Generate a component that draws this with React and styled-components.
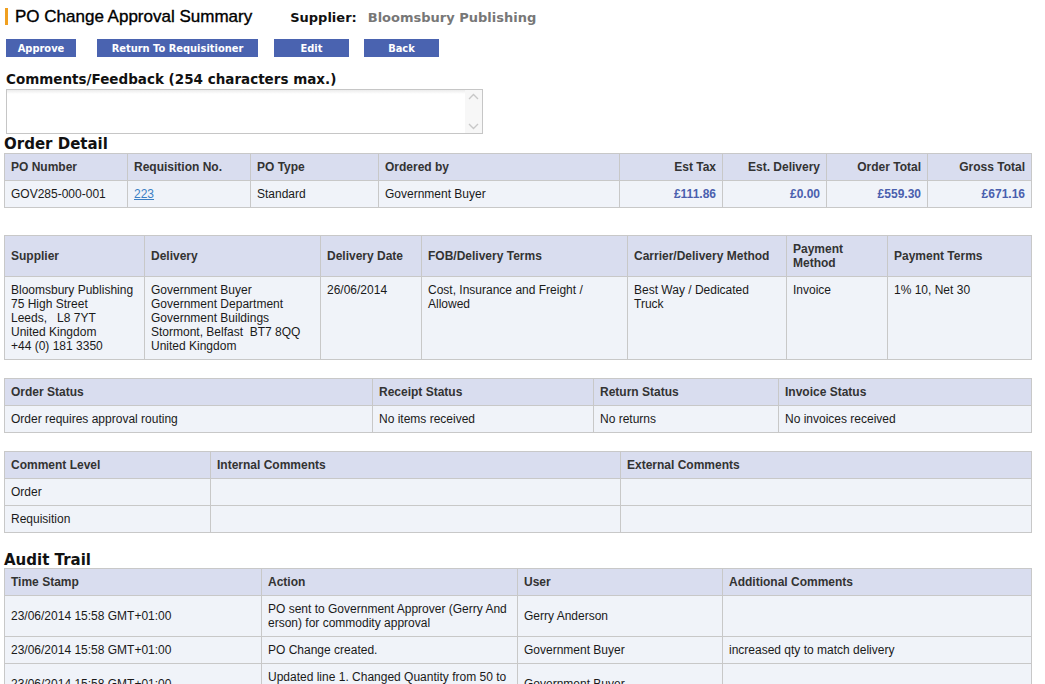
import React from 'react';
import styled, { createGlobalStyle } from 'styled-components';

const GlobalStyle = createGlobalStyle`
  body {
    margin: 0;
    background: #fff;
    font-family: 'Liberation Sans', Arial, sans-serif;
    color: #1a1a1a;
  }
`;

// STYLES

const Page = styled.div`
  padding: 6px 0 0 4px;
  width: 1027px;
`;

const TitleRow = styled.div`
  display: flex;
  align-items: flex-end;
  height: 19px;
`;
const Title = styled.h1`
  margin: 0 0 0 1px;
  padding-left: 7px;
  border-left: 3px solid #f0a020;
  font-family: 'Liberation Sans', Arial, sans-serif;
  font-size: 17px;
  line-height: 17px;
  font-weight: normal;
  -webkit-text-stroke: 0.35px #000;
  color: #000;
`;
const SupplierLabel = styled.span`
  margin-left: 38px;
  font-family: 'DejaVu Sans', Verdana, sans-serif;
  font-weight: bold;
  font-size: 13px;
  color: #111;
`;
const SupplierName = styled.span`
  margin-left: 11px;
  font-family: 'DejaVu Sans', Verdana, sans-serif;
  font-weight: bold;
  font-size: 13px;
  color: #777;
`;

const ButtonBar = styled.div`
  display: flex;
  margin: 14px 0 0 2px;
`;
const Button = styled.button`
  width: ${p => p.w}px;
  margin-right: ${p => p.gap}px;
  height: 18px;
  padding: 0;
  border: none;
  background: #4a63b0;
  color: #fff;
  font-family: 'DejaVu Sans Condensed', 'DejaVu Sans', Verdana, sans-serif;
  font-weight: bold;
  font-size: 11px;
  cursor: pointer;
`;

const Label = styled.div`
  margin: 14px 0 0 2px;
  font-family: 'DejaVu Sans', Verdana, sans-serif;
  font-weight: bold;
  font-size: 13.5px;
  line-height: 17px;
  color: #111;
`;

const CommentBox = styled.div`
  display: flex;
  width: 475px;
  height: 43px;
  margin: 1px 0 0 2px;
  border: 1px solid #c6c6c6;
  background: #fff;
`;
const CommentInput = styled.textarea`
  flex: 1;
  border: none;
  outline: none;
  resize: none;
  padding: 2px;
  background: linear-gradient(#ececec, #fff 4px);
`;
const ScrollStrip = styled.div`
  width: 17px;
  display: flex;
  flex-direction: column;
  justify-content: space-between;
  align-items: center;
  padding: 3px 0;
  background: #f7f7f7;
`;

const SectionTitle = styled.div`
  margin-top: ${p => p.top || 0}px;
  margin-bottom: ${p => p.bottom || 0}px;
  font-family: 'DejaVu Sans', Verdana, sans-serif;
  font-weight: bold;
  font-size: 15px;
  line-height: 16px;
  color: #111;
`;

const Table = styled.table`
  width: 1027px;
  margin-top: ${p => p.top || 0}px;
  border-collapse: collapse;
  table-layout: fixed;
  font-family: 'Liberation Sans', Arial, sans-serif;
  font-size: 12px;
  line-height: 14px;
`;
const Th = styled.th`
  padding: 6px 6px;
  border: 1px solid #c8c8c8;
  background: #d9ddef;
  color: #333;
  font-weight: bold;
  text-align: ${p => (p.right ? 'right' : 'left')};
  vertical-align: middle;
`;
const Td = styled.td`
  padding: 6px 6px;
  border: 1px solid #c8c8c8;
  background: #f0f3f9;
  color: #1a1a1a;
  text-align: ${p => (p.right ? 'right' : 'left')};
  vertical-align: ${p => (p.top ? 'top' : 'middle')};
  word-break: ${p => (p.breakAll ? 'break-all' : 'normal')};
`;
const Money = styled.span`
  font-weight: bold;
  color: #4a5fae;
`;
const Link = styled.a`
  color: #3b7fc4;
  text-decoration: underline;
`;

const Chevron = ({ up }) => (
  <svg width="11" height="7" viewBox="0 0 11 7">
    <path
      d={up ? 'M1 6 L5.5 1.5 L10 6' : 'M1 1 L5.5 5.5 L10 1'}
      fill="none"
      stroke="#c8c8c8"
      strokeWidth="1.4"
    />
  </svg>
);

const Cols = ({ widths }) => (
  <colgroup>
    {widths.map((w, i) => (
      <col key={i} style={{ width: w }} />
    ))}
  </colgroup>
);

const audit = [
  {
    time: '23/06/2014 15:58 GMT+01:00',
    action: 'PO sent to Government Approver (Gerry Anderson) for commodity approval',
    user: 'Gerry Anderson',
    note: '',
  },
  {
    time: '23/06/2014 15:58 GMT+01:00',
    action: 'PO Change created.',
    user: 'Government Buyer',
    note: 'increased qty to match delivery',
  },
  {
    time: '23/06/2014 15:58 GMT+01:00',
    action: 'Updated line 1. Changed Quantity from 50 to 60.',
    user: 'Government Buyer',
    note: '',
  },
];

const Multi = ({ lines }) =>
  lines.map((l, i) => (
    <React.Fragment key={i}>
      {l}
      {i < lines.length - 1 && <br />}
    </React.Fragment>
  ));

export default function App() {
  return (
    <Page>
      <GlobalStyle />
      <TitleRow>
        <Title>PO Change Approval Summary</Title>
        <SupplierLabel>Supplier:</SupplierLabel>
        <SupplierName>Bloomsbury Publishing</SupplierName>
      </TitleRow>

      <ButtonBar>
        <Button w={70} gap={21}>Approve</Button>
        <Button w={161} gap={16}>Return To Requisitioner</Button>
        <Button w={75} gap={15}>Edit</Button>
        <Button w={75} gap={0}>Back</Button>
      </ButtonBar>

      <Label>Comments/Feedback (254 characters max.)</Label>
      <CommentBox>
        <CommentInput />
        <ScrollStrip>
          <Chevron up />
          <Chevron />
        </ScrollStrip>
      </CommentBox>

      <SectionTitle top={2} bottom={1}>Order Detail</SectionTitle>
      <Table>
        <Cols widths={[123, 123, 128, 241, 103, 104, 101, 104]} />
        <thead>
          <tr>
            <Th>PO Number</Th>
            <Th>Requisition No.</Th>
            <Th>PO Type</Th>
            <Th>Ordered by</Th>
            <Th right>Est Tax</Th>
            <Th right>Est. Delivery</Th>
            <Th right>Order Total</Th>
            <Th right>Gross Total</Th>
          </tr>
        </thead>
        <tbody>
          <tr>
            <Td>GOV285-000-001</Td>
            <Td>
              <Link href="#">223</Link>
            </Td>
            <Td>Standard</Td>
            <Td>Government Buyer</Td>
            <Td right>
              <Money>£111.86</Money>
            </Td>
            <Td right>
              <Money>£0.00</Money>
            </Td>
            <Td right>
              <Money>£559.30</Money>
            </Td>
            <Td right>
              <Money>£671.16</Money>
            </Td>
          </tr>
        </tbody>
      </Table>

      <Table top={27}>
        <Cols widths={[140, 176, 101, 206, 159, 101, 144]} />
        <thead>
          <tr>
            <Th>Supplier</Th>
            <Th>Delivery</Th>
            <Th>Delivery Date</Th>
            <Th>FOB/Delivery Terms</Th>
            <Th>Carrier/Delivery Method</Th>
            <Th>Payment Method</Th>
            <Th>Payment Terms</Th>
          </tr>
        </thead>
        <tbody>
          <tr>
            <Td top>
              <Multi
                lines={[
                  'Bloomsbury Publishing',
                  '75 High Street',
                  'Leeds,\u00a0\u00a0 L8 7YT',
                  'United Kingdom',
                  '+44 (0) 181 3350',
                ]}
              />
            </Td>
            <Td top>
              <Multi
                lines={[
                  'Government Buyer',
                  'Government Department',
                  'Government Buildings',
                  'Stormont, Belfast\u00a0 BT7 8QQ',
                  'United Kingdom',
                ]}
              />
            </Td>
            <Td top>26/06/2014</Td>
            <Td top>Cost, Insurance and Freight / Allowed</Td>
            <Td top>Best Way / Dedicated Truck</Td>
            <Td top>Invoice</Td>
            <Td top>1% 10, Net 30</Td>
          </tr>
        </tbody>
      </Table>

      <Table top={18}>
        <Cols widths={[368, 221, 185, 253]} />
        <thead>
          <tr>
            <Th>Order Status</Th>
            <Th>Receipt Status</Th>
            <Th>Return Status</Th>
            <Th>Invoice Status</Th>
          </tr>
        </thead>
        <tbody>
          <tr>
            <Td>Order requires approval routing</Td>
            <Td>No items received</Td>
            <Td>No returns</Td>
            <Td>No invoices received</Td>
          </tr>
        </tbody>
      </Table>

      <Table top={18}>
        <Cols widths={[206, 410, 411]} />
        <thead>
          <tr>
            <Th>Comment Level</Th>
            <Th>Internal Comments</Th>
            <Th>External Comments</Th>
          </tr>
        </thead>
        <tbody>
          <tr>
            <Td>Order</Td>
            <Td></Td>
            <Td></Td>
          </tr>
          <tr>
            <Td>Requisition</Td>
            <Td></Td>
            <Td></Td>
          </tr>
        </tbody>
      </Table>

      <SectionTitle top={19}>Audit Trail</SectionTitle>
      <Table>
        <Cols widths={[257, 256, 205, 309]} />
        <thead>
          <tr>
            <Th>Time Stamp</Th>
            <Th>Action</Th>
            <Th>User</Th>
            <Th>Additional Comments</Th>
          </tr>
        </thead>
        <tbody>
          {audit.map((row, i) => (
            <tr key={i}>
              <Td>{row.time}</Td>
              <Td breakAll>{row.action}</Td>
              <Td>{row.user}</Td>
              <Td>{row.note}</Td>
            </tr>
          ))}
        </tbody>
      </Table>
    </Page>
  );
}
